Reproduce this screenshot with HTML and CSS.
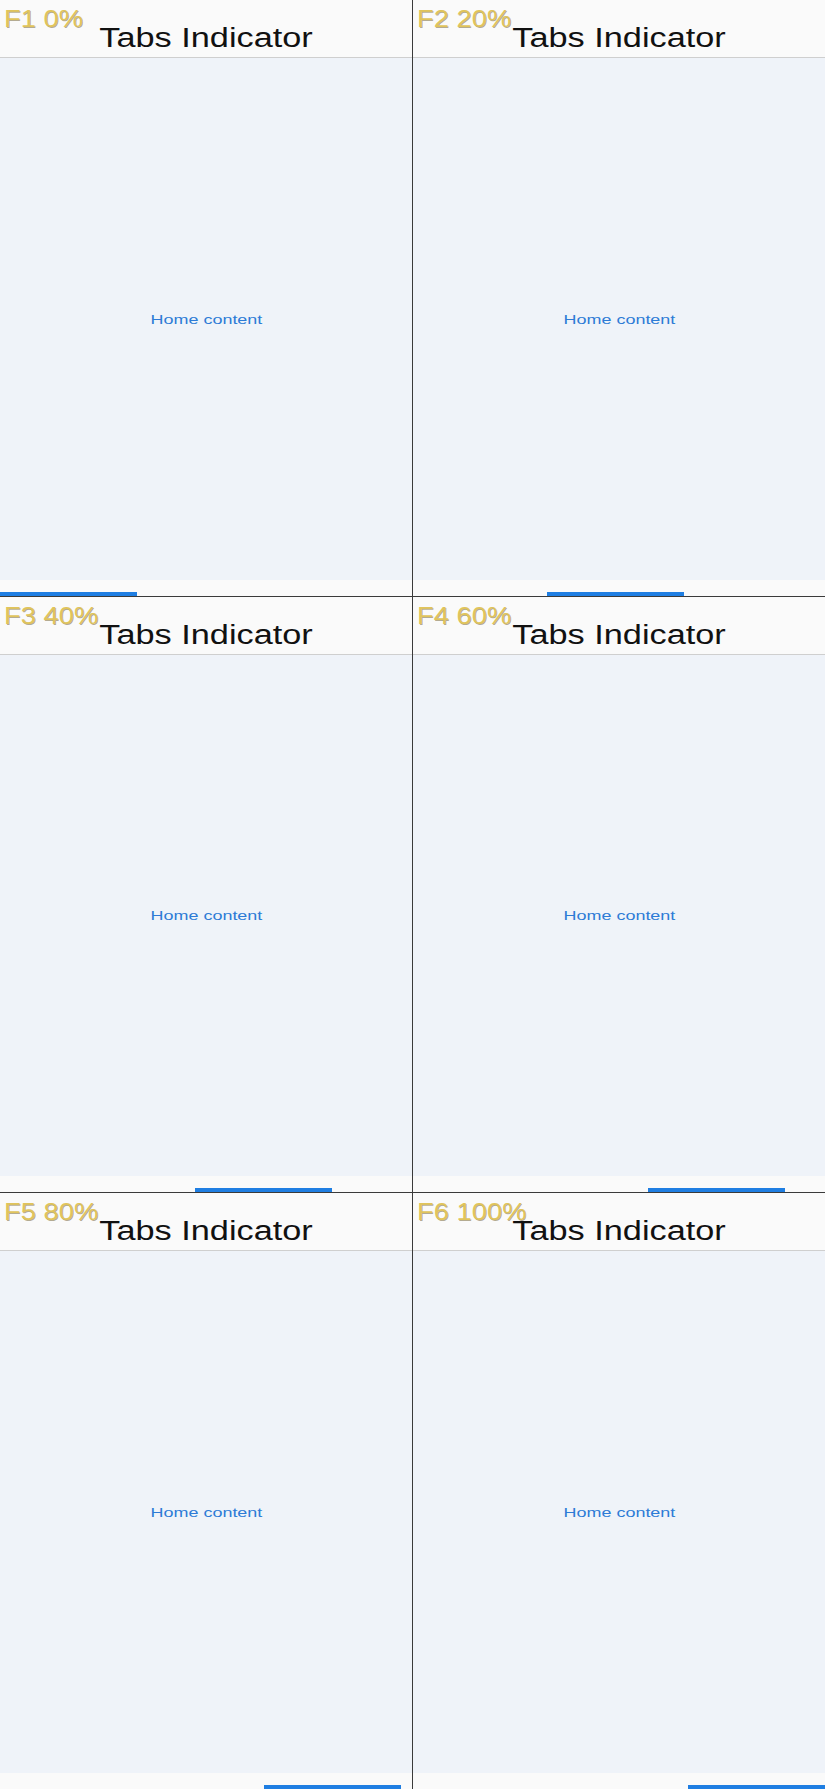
FILE: index.html
```html
<!DOCTYPE html>
<html>
<head>
<meta charset="utf-8">
<link rel="stylesheet" href="styles.css">
</head>
<body>
<div class="grid">
  <div class="frame">
    <div class="header"><span class="title">Tabs Indicator</span></div>
    <div class="content"><span class="home">Home content</span></div>
    <div class="tabbar"><div class="indicator" style="margin-left:0px"></div></div>
    <span class="label">F1 0%</span>
  </div>
  <div class="frame">
    <div class="header"><span class="title">Tabs Indicator</span></div>
    <div class="content"><span class="home">Home content</span></div>
    <div class="tabbar"><div class="indicator" style="margin-left:134px"></div></div>
    <span class="label">F2 20%</span>
  </div>
  <div class="frame">
    <div class="header"><span class="title">Tabs Indicator</span></div>
    <div class="content"><span class="home">Home content</span></div>
    <div class="tabbar"><div class="indicator" style="margin-left:195px"></div></div>
    <span class="label">F3 40%</span>
  </div>
  <div class="frame">
    <div class="header"><span class="title">Tabs Indicator</span></div>
    <div class="content"><span class="home">Home content</span></div>
    <div class="tabbar"><div class="indicator" style="margin-left:235px"></div></div>
    <span class="label">F4 60%</span>
  </div>
  <div class="frame">
    <div class="header"><span class="title">Tabs Indicator</span></div>
    <div class="content"><span class="home">Home content</span></div>
    <div class="tabbar"><div class="indicator" style="margin-left:264px"></div></div>
    <span class="label">F5 80%</span>
  </div>
  <div class="frame">
    <div class="header"><span class="title">Tabs Indicator</span></div>
    <div class="content"><span class="home">Home content</span></div>
    <div class="tabbar"><div class="indicator" style="margin-left:275px"></div></div>
    <span class="label">F6 100%</span>
  </div>
</div>
</body>
</html>
```
FILE: styles.css
```css
html, body {
  margin: 0;
  padding: 0;
  background: #fafafa;
}
body {
  font-family: "Liberation Sans", Arial, sans-serif;
  width: 825px;
  height: 1789px;
  overflow: hidden;
}
.grid {
  display: grid;
  grid-template-columns: 412px 412px;
  grid-template-rows: 596px 595px 596px;
  gap: 1px;
  background: #3a3a3a;
  width: 825px;
  height: 1789px;
}
.frame {
  position: relative;
  display: flex;
  flex-direction: column;
  overflow: hidden;
  background: #fafafa;
}
.header {
  box-sizing: border-box;
  height: 58px;
  flex: none;
  padding-top: 25px;
  border-bottom: 1px solid #cfcfcf;
  background: #fafafa;
  display: flex;
  justify-content: center;
}
.title {
  display: inline-block;
  font-size: 27px;
  line-height: 27px;
  color: #111;
  transform: scaleX(1.27);
  transform-origin: center;
}
.content {
  flex: 1;
  background: #eff3f9;
  display: flex;
  align-items: center;
  justify-content: center;
}
.home {
  display: inline-block;
  font-size: 13px;
  line-height: 13px;
  color: #2d7bd6;
  transform: scaleX(1.38);
}
.tabbar {
  flex: none;
  height: 16px;
  background: #fafafa;
  display: flex;
  align-items: flex-end;
}
.indicator {
  width: 137px;
  height: 4px;
  background: #1f7ee2;
}
.label {
  position: absolute;
  top: 7px;
  left: 4px;
  font-size: 24px;
  line-height: 24px;
  color: #e0c45c;
  text-shadow: 0.6px 0.6px 0 rgba(90, 70, 10, 0.45);
  transform: scaleX(1.14);
  transform-origin: left top;
  white-space: nowrap;
}
```
